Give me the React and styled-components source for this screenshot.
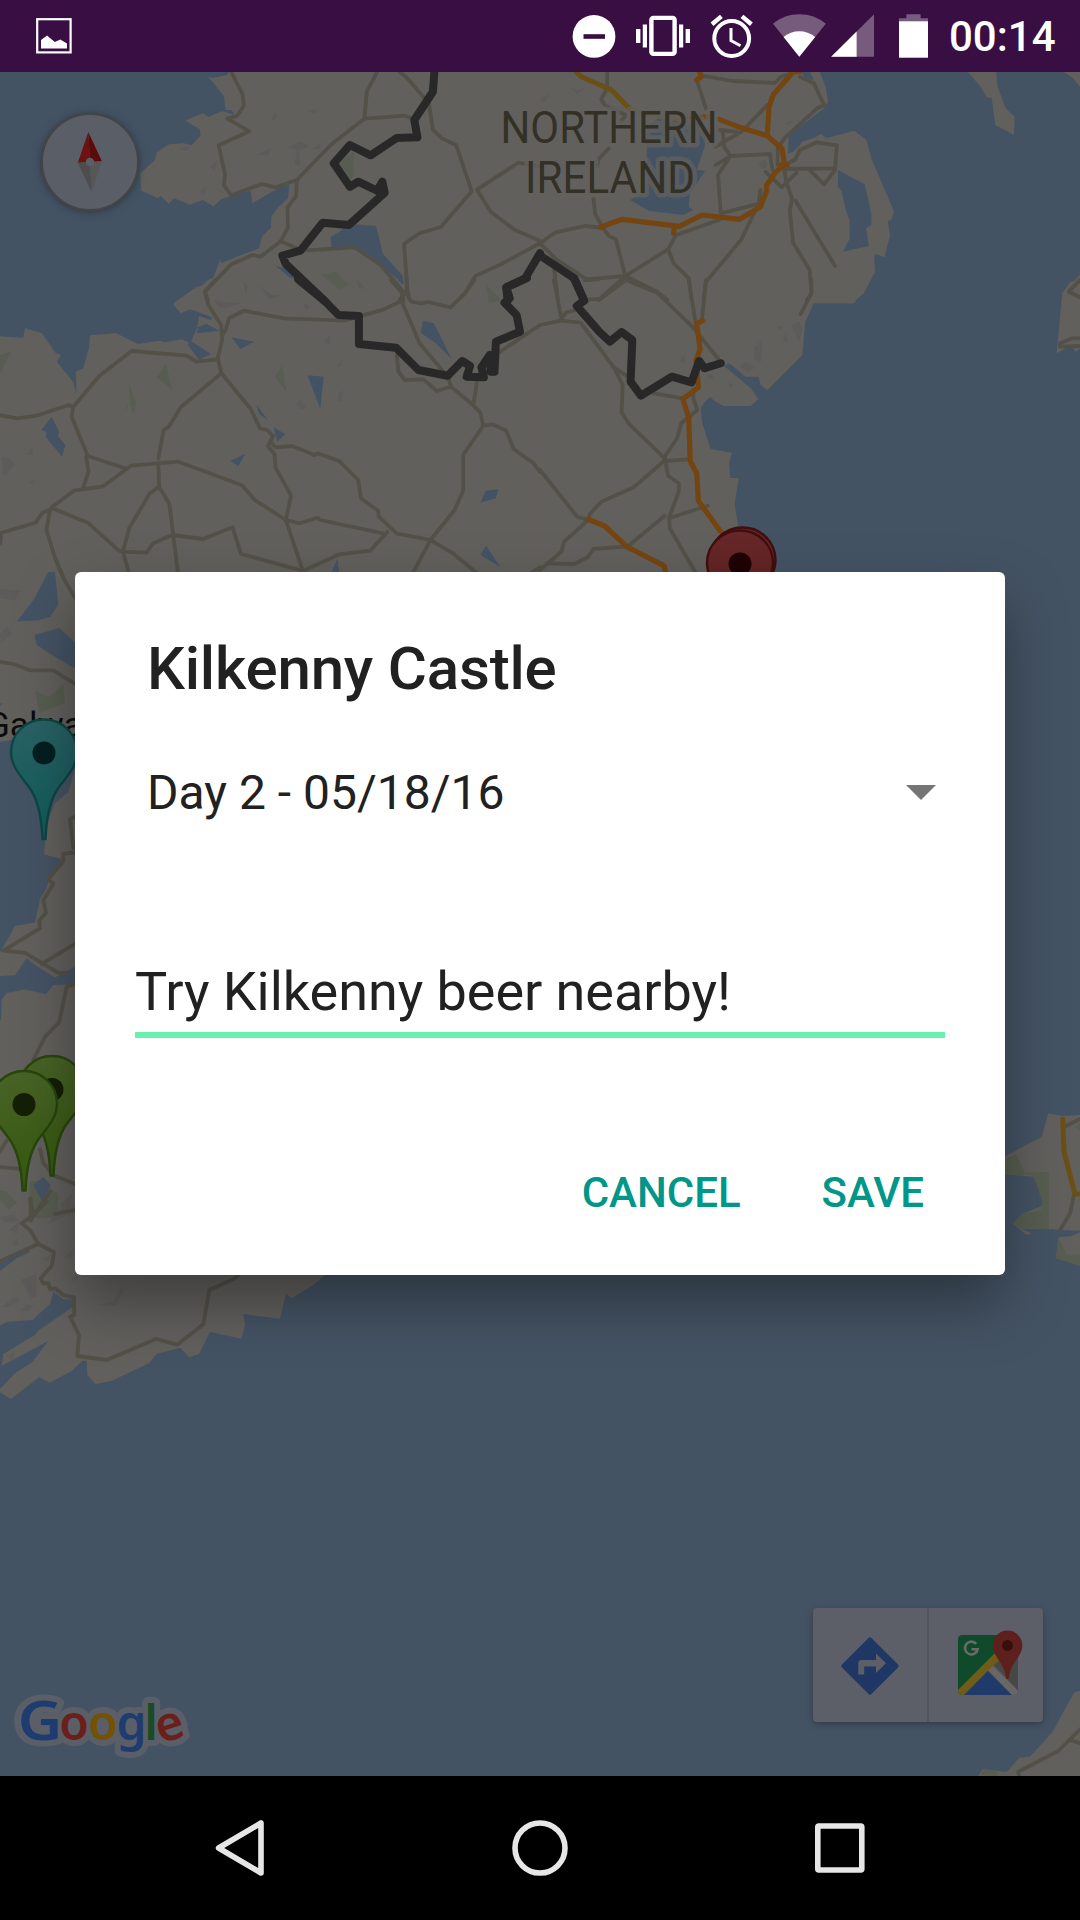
import React from 'react';
import styled, { createGlobalStyle } from 'styled-components';

const Global = createGlobalStyle`
  *, *::before, *::after { box-sizing: border-box; }
  body { margin: 0; background: #000; font-family: Roboto, "Noto Sans", sans-serif; }
`;

const Screen = styled.div`
  width: 1080px;
  height: 1920px;
  display: flex;
  flex-direction: column;
  overflow: hidden;
  background: #000;
`;

/* ---------- status bar ---------- */

const StatusBar = styled.header`
  flex: none;
  height: 72px;
  display: flex;
  align-items: center;
  justify-content: space-between;
  padding: 0 24px 0 36px;
  background: #390e43;
`;

const StatusGroup = styled.div`
  display: flex;
  align-items: center;
`;

const StatusIcon = styled.svg`
  display: block;
  flex: none;
  width: ${(p) => p.$w}px;
  height: 72px;
  margin-right: ${(p) => p.$gap || 0}px;
`;

const Clock = styled.span`
  width: 107px;
  font-size: 42px;
  line-height: 72px;
  font-weight: 500;
  color: #fff;
  white-space: nowrap;
  padding-top: 2px;
`;

/* ---------- map ---------- */

const MapPane = styled.main`
  position: relative;
  flex: 1;
  background: #445364;
  overflow: hidden;
`;

const MapCanvas = styled.svg`
  display: block;
  width: 1080px;
  height: 1704px;
`;

const Compass = styled.div`
  position: absolute;
  left: 41px;
  top: 41px;
  width: 98px;
  height: 98px;
  border-radius: 50%;
  background: #5a5f67;
  border: 2px solid #454545;
  box-shadow: 0 1px 9px rgba(0, 0, 0, 0.35);
  display: flex;
  align-items: center;
  justify-content: center;
`;

const MapTools = styled.div`
  position: absolute;
  right: 37px;
  bottom: 54px;
  width: 230px;
  height: 114px;
  display: flex;
  border-radius: 4px;
  background: #5c5f67;
  box-shadow: 0 2px 7px rgba(0, 0, 0, 0.3);
`;

const ToolButton = styled.button`
  width: ${(p) => (p.$divided ? 116 : 114)}px;
  border: 0;
  border-left: ${(p) => (p.$divided ? '2px solid #50555e' : '0')};
  padding: ${(p) => p.$pad};
  background: none;
  display: flex;
  align-items: center;
  justify-content: center;
`;

/* ---------- dialog ---------- */

const Overlay = styled.div`
  position: absolute;
  inset: 0;
  display: flex;
  align-items: center;
  justify-content: center;
  padding-bottom: 1px;
`;

const Dialog = styled.section`
  width: 930px;
  height: 703px;
  display: flex;
  flex-direction: column;
  padding: 61px 60px 0;
  border-radius: 6px;
  background: #fff;
  color: #212121;
  box-shadow: 0 28px 60px rgba(0, 0, 0, 0.36);
`;

const Title = styled.h1`
  margin: 0;
  padding-left: 12px;
  font-size: 60px;
  line-height: 72px;
  font-weight: 500;
  letter-spacing: -0.18px;
`;

const DaySelect = styled.div`
  display: flex;
  align-items: center;
  justify-content: space-between;
  margin-top: 52px;
  padding: 0 9px 0 12px;
  font-size: 48px;
  line-height: 72px;
`;

const Caret = styled.svg`
  display: block;
  width: 30px;
  height: 15px;
  margin-bottom: 2px;
`;

const NoteField = styled.div`
  margin-top: 119px;
  height: 90px;
  border-bottom: 6px solid #69f0ae;
  font-size: 54px;
  line-height: 88px;
  letter-spacing: -0.05px;
  white-space: nowrap;
`;

const Actions = styled.footer`
  display: flex;
  justify-content: flex-end;
  gap: 81px;
  margin-top: 119px;
  padding-right: 21px;
`;

const Action = styled.button`
  border: 0;
  padding: 0;
  background: none;
  font-family: inherit;
  font-size: 42px;
  line-height: 72px;
  font-weight: 500;
  color: #009688;
`;

/* ---------- navigation bar ---------- */

const NavBar = styled.nav`
  flex: none;
  height: 144px;
  display: flex;
  align-items: center;
  justify-content: space-between;
  padding: 0 210px;
  background: #000;
`;

const NavIcon = styled.svg`
  display: block;
  width: 60px;
  height: 60px;
  fill: none;
  stroke: #e6e6e6;
  stroke-width: 5.6;
  stroke-linejoin: round;
`;

/* ---------- map geometry ---------- */

// Each tile keeps its own grid: x, y is the origin, kx and ky the size of a unit.
const K = 540 / 1568;
const T = 1 / 3;

const tiles = [
  {
    x: 0, y: 0, kx: K, ky: T,
    land: [
      '605,230 650,288 655,330 672,330 682,345 645,334 605,350 588,340 538,362 580,388 583,405 557,436 533,430 492,433 475,443 455,458 450,480 407,520 410,572 458,594 467,588 490,612 505,595 552,614 588,600 620,619 642,598 672,588 728,572 733,610 815,560 840,556 836,595 805,625 788,650 787,683 762,708 752,745 700,765 643,790 640,778 620,832 580,855 585,862 523,900 523,910 1575,910 1575,210 668,210 660,225 618,234',
    ],
    water: [
      '960,712 1020,672 1092,678 1112,762 1170,828 1172,852 1105,795 1040,745 963,742',
      '800,797 850,812 862,838 840,832',
    ],
    green: ['985,490 1027,455 1027,525 1015,548', '935,825 975,814 1012,855 985,868'],
    relief: [
      '788,358 805,335 800,358', '892,332 918,330 918,342', '745,465 788,443 778,466', '905,446 942,426 925,448',
      '835,443 870,423 897,440 868,450 872,495 855,495 862,450', '610,500 630,482 622,512', '525,447 550,438 542,453',
      '708,845 718,858 714,880', '752,858 790,888 812,886 785,895', '1037,838 1060,866 1040,862', '582,575 600,560 592,585',
    ],
    roads: [
      '672,216 705,285 708,318 688,348 660,356 724,394 635,436 653,522 650,556 672,586 760,552 800,562 862,540 960,435 1058,356 1175,347 1195,355',
      '1095,216 1065,275 1058,356',
      '1160,216 1180,232 1230,292 1245,310 1257,388 1283,415 1325,436 1370,574 1280,681 1218,700 1173,732 1183,870 1190,900',
      '862,540 860,588 835,622 836,683 815,724 757,770 733,765 672,793 595,875 603,900',
      '815,724 878,752 1030,742 1105,795 1175,880 1160,900',
      '1568,722 1495,690 1425,635 1385,569 1505,488 1568,500',
      '1568,730 1450,795 1380,828 1350,880 1330,900',
    ],
    border: [
      '1262,206 1257,275 1203,360 1212,412 1152,414 1076,466 1016,435 969,490 1016,560 1040,545 1095,572 1110,545 1117,578 1013,675 937,668 872,752 820,767 830,792 940,900',
      '1568,760 1525,835 1470,862 1474,902',
    ],
  },
  {
    x: 540, y: 0, kx: K, ky: T,
    land: [
      '-5,210 755,210 770,235 795,240 785,218 810,210 830,262 836,305 825,325 722,405 720,460 735,455 750,440 762,425 800,412 815,402 832,415 912,392 948,420 962,475 1028,635 1020,660 1010,662 1016,708 1000,772 975,762 970,770 973,815 940,880 918,900 912,910 -5,910',
      '1240,212 1325,212 1328,258 1352,325 1378,350 1376,404 1322,375 1312,295 1295,290 1283,265',
      '1515,212 1575,212 1575,268 1545,232',
      '1572,820 1517,880 1514,910 1575,910',
    ],
    water: [
      '865,510 943,553 963,645 962,675 947,685 955,738 880,755 900,715 898,660 888,630 875,572 865,560',
      '310,380 350,350 480,370 478,440 455,510 480,512 435,580 432,620 445,630 415,645 315,632 262,600 310,570',
    ],
    relief: ['90,262 108,272 130,262 108,282', '0,300 28,280 15,305', '710,372 735,360 722,376', '635,490 655,475 660,500 645,508', '668,525 690,545 672,545'],
    roads: [
      '195,216 195,265 178,297 190,318 250,345 235,365',
      '475,228 560,243 682,249 700,230 730,220',
      '455,240 482,325',
      '755,230 795,250 825,315 805,325 712,412 690,445 690,495',
      '660,315 585,395 510,440',
      '520,390 570,395', '530,390 535,440 553,468 668,462 675,510',
      '510,495 553,468 517,525 525,640 640,610',
      '720,490 740,480 755,450 803,427 862,436 857,505 710,507',
      '655,515 702,562 745,518', '785,512 825,553 857,510',
      '710,510 715,545 732,597 725,630 735,728 783,810 788,880 775,900',
      '742,602 857,798',
      '640,570 635,610 585,718 482,845 475,900',
      '520,660 395,705 372,748 388,790 432,835 440,900',
      '372,748 248,828 220,718 200,708 180,680 160,640 155,595',
      '248,828 135,838 50,780 0,730 45,697 130,678 170,682',
      '248,828 170,900', '248,828 340,875 370,900', '40,800 52,900', '200,445 170,478 165,500',
    ],
    trunk: ['105,216 120,230 208,270 262,328'],
    trunkFaint: ['262,328 320,345 400,358 440,355'],
    motorway: [
      '440,355 485,350', '520,358 575,380 660,407 703,447 710,495 685,515 658,555 658,572 640,620 580,658 470,645 405,679 238,658 175,682',
      '755,214 735,216 678,283 665,320 660,407', '388,700 390,682 405,679', '455,240 468,230 462,212', '700,495 718,495',
    ],
    border: ['-2,765 100,835 128,902'],
  },
  {
    x: 0, y: 280, kx: K, ky: T,
    land: [
      '530,-2 503,74 525,100 553,88 615,112 612,120 578,108 572,145 553,190 528,178 490,185 478,187 465,182 400,192 338,160 262,166 258,205 242,265 220,275 222,340 212,305 165,245 178,225 162,220 122,160 73,144 67,174 -5,168 -5,905 1575,905 1575,-2',
    ],
    water: [
      '520,-4 608,-4 585,18 572,20 500,72 480,60',
      '575,142 600,132 637,152 572,160', '553,182 612,222 578,240 560,215 545,195',
      '672,172 738,185 698,207', '893,286 940,290 930,388', '745,375 778,420 752,402', '795,442 828,462 805,485',
      '668,542 712,522 692,558', '150,410 120,450 135,455 133,472 180,530 190,495 168,468 172,455',
      '1228,122 1260,130 1312,238 1265,190 1222,158', '1410,632 1447,628 1440,655 1395,668', '1412,797 1453,862 1395,825',
      '980,835 985,880 962,880', '1155,0 1170,0 1170,14',
    ],
    green: [
      '0,225 32,215 0,280', '482,252 500,330 455,292', '375,315 397,370 387,402 378,375', '820,255 832,335 798,292', '1412,15 1455,60 1420,70',
    ],
    relief: [
      '620,60 650,66 698,70 655,85 635,80', '708,5 718,18 714,42', '752,18 790,46 812,45 785,58', '1037,0 1060,26 1040,22',
      '942,180 960,165 955,197', '978,258 992,238 990,260', '982,340 997,332 992,362 980,362', '860,368 875,358 888,385 870,388',
      '358,392 374,370 370,385', '5,530 20,530 45,552 10,588', '78,525 92,500 96,525', '82,608 105,598 95,612', '880,72 900,78 890,90',
    ],
    roads: [
      '625,0 595,35 605,75 642,135 645,180 632,235 643,280 728,387 755,445 775,450 793,468 778,498 797,523 800,563 845,647 830,720 882,880',
      '645,165 655,150 665,115 708,92 825,115 1000,122 1115,88 1172,60 1165,35 1135,0',
      '1165,60 1218,190 1300,290 1310,320 1370,372 1395,398 1403,437 1345,525 1345,632 1320,690 1250,780 1198,880',
      '1403,437 1430,433 1470,452 1492,508 1548,548 1568,575',
      '1180,0 1182,45 1195,65 1222,70 1243,66 1308,82 1350,40 1378,0',
      '1152,225 1157,275 1175,300 1230,298 1268,333 1310,320',
      '1385,305 1375,372', '1568,135 1445,220',
      '632,238 570,245 542,227 382,213 288,288 212,382 200,375 110,406 52,415 0,406',
      '212,382 208,410 255,528 368,566', '250,530 257,575 240,628',
      '643,280 525,382 490,440 475,450 460,535',
      '152,680 215,632 300,619 380,557 518,545 703,616 740,660 830,720 870,730 922,713 930,720 1112,760',
      '460,550 462,620 435,640 375,745 357,815 375,880', '462,620 492,672 503,765 517,880',
      '0,760 103,728 122,700 152,685 255,728 345,812 357,815 425,818 445,790 500,765 590,777 675,742 700,822 880,873 985,823 1075,812 1125,755',
      '790,490 800,502 848,498 913,525 922,520 985,543 1040,600 1048,655 1098,692 1100,710 1152,760 1250,780 1315,820 1385,880',
      '145,690 135,750 160,835 187,900', '0,760 3,775 0,790', '1540,880 1568,862',
    ],
    border: [
      '940,60 983,105 1042,108 1042,192 1150,203 1215,270 1300,287 1342,243 1365,258 1355,290 1405,292 1398,262 1422,225 1425,275 1436,275 1440,185 1510,155 1500,105 1465,68 1480,55 1470,22 1530,-6',
      '866,-2 945,65',
    ],
  },
  {
    x: 540, y: 280, kx: K, ky: T,
    land: [
      '-5,-2 957,-2 940,40 903,71 830,58 798,62 770,125 762,225 660,330 640,315 635,290 597,290 550,250 535,258 612,325 634,357 612,378 533,378 505,362 495,350 478,365 467,385 470,425 495,507 557,518 549,550 552,594 577,594 565,672 576,745 600,900 -5,900',
      '1575,-2 1540,5 1517,40 1500,220 1535,200 1548,205 1555,215 1575,200',
    ],
    relief: ['622,200 645,182 640,250 620,235', '580,262 598,245 625,262 605,275', '730,135 752,125 762,150 752,185', '705,180 715,155 718,190', '407,245 420,220 422,250', '545,310 560,312 555,322', '685,138 705,140 698,150', '480,285 500,282 505,300'],
    roads: [
      '40,0 62,115 75,98 105,90', '0,135 60,122 118,128 215,263 240,315 237,397 257,430 360,533 398,475 410,430 457,390 445,355 445,330',
      '130,58 175,57 250,0 340,38 445,143 520,240', '432,0 452,130', '482,0 470,120', '788,0 788,40 757,102',
      '330,340 415,355', '360,543 272,622 178,665 145,702 140,720 70,785 62,815 0,870', '360,543 430,538',
      '362,533 372,587 403,610 403,635 375,712 377,745 450,875', '375,715 487,677', '260,795 362,707', '0,570 108,710 140,720',
      '20,850 100,852 138,832 155,807 245,800', '210,260 255,290', '1568,0 1535,35 1568,52', '1568,175 1545,175 1510,190 1510,200 1568,198',
      '130,0 170,-2',
    ],
    motorway: ['473,122 455,130 465,208 453,240 460,322 415,357 432,415 436,543 455,580 460,663 525,755', '140,718 188,738 252,800 360,857 367,885'],
    border: ['99,-4 128,62 107,78 172,155 203,185 237,156 268,180 263,305 293,347 383,290 440,307 462,243 478,265 525,250'],
  },
  {
    x: 0, y: 560, kx: T, ky: 0.44643,
    land: ['-3,20 240,20 240,1450 -3,1450'],
    water: [
      '-3,408 60,400 240,400 225,470 205,520 165,545 140,590 132,660 185,670 150,710 140,735 120,760 105,812 45,820 -3,884',
      '-3,932 45,930 80,892 100,905 165,935 240,905 240,950 160,952 138,972 75,962 20,970 5,985 3,1030 -3,1032',
      '50,138 100,90 145,27 165,27 175,100 150,128 115,135', '103,168 178,152 240,195 240,250 150,210 110,190', '-3,322 8,320 -3,330',
    ],
    green: ['105,292 145,308 190,278 195,320 118,343', '88,1392 120,1390 175,1420 170,1470 120,1475 88,1468', '-3,1412 20,1415 50,1440 25,1455 -3,1430'],
    relief: ['0,65 60,68 45,90 0,85', '0,165 20,150 35,165 5,185', '180,1445 215,1420 210,1470', '30,1500 60,1480 50,1510'],
    roads: [
      '0,228 40,233 90,247 160,247 225,277', '165,-5 190,40 225,85', '225,575 210,580 220,645',
      '225,655 190,658 190,675 145,715 160,725 130,762 138,790 118,808 120,825 10,875 75,880 175,925 200,925', '125,905 225,860',
      '225,950 200,955 178,1035 135,1068 100,1120', '0,1360 80,1365', '0,1325 20,1300', '120,1320 130,1350 160,1378 225,1398', '92,1478 150,1415', '92,1430 92,1480',
    ],
    lakes: ['100,1400 130,1382 152,1400 125,1435'],
  },
  {
    x: 0, y: 1200, kx: T, ky: T,
    land: [
      '-3,-10 1000,-10 1000,205 975,225 940,255 875,295 858,280 840,356 768,347 730,342 735,375 725,416 630,396 597,462 568,472 540,443 470,462 447,490 335,542 287,552 262,525 260,482 248,482 215,512 150,548 117,532 33,597 -3,575 -3,570 45,520 97,487 145,423 5,497 10,462 105,405 115,392 222,318 215,298 190,298 160,275 150,312 97,360 22,365 -3,378 -3,215 50,175 90,155 80,148 -3,185',
    ],
    green: ['88,-3 175,-3 172,40 140,55 92,48'],
    relief: [
      '62,240 108,222 110,290 92,292', '188,178 218,150 218,170', '5,322 40,292 60,300 25,320', '298,315 340,305 360,268 370,266 348,318',
      '215,232 240,225 220,250', '38,132 52,118 54,138', '25,92 50,78 52,90', '20,470 45,452 38,480', '65,330 80,312 100,318 82,335', '0,50 40,45 60,62 10,68', '170,30 225,20 190,52 145,72', '128,180 152,162 148,182',
    ],
    roads: [
      '-3,185 115,132 90,90 65,70 100,45 140,5', '115,132 162,157 155,198 122,235 130,250 145,250 150,268 165,265 190,285 222,292 223,345 210,350 237,405 232,468 320,480 468,417 532,434 610,373 628,270 705,235 718,222',
      '100,45 90,-3', '165,42 225,30',
    ],
  },
  {
    x: 980, y: 1080, kx: T, ky: T,
    land: [
      '70,232 185,170 205,100 248,108 303,105 303,452 245,450 205,447 125,447 155,460 140,465 100,432 125,402 185,378 188,365 162,290 70,283',
      '303,455 275,468 235,472 228,535 303,558',
    ],
    green: [
      '70,235 108,225 135,278 130,287 70,283', '135,278 207,276 207,447 120,445 100,430 125,402 183,390 188,365 162,290',
      '235,475 262,525 303,522 303,558 228,535', '285,140 303,128 303,155', '295,360 303,355 303,368',
    ],
    roads: ['258,138 303,116', '282,345 270,400 240,450'],
    trunk: ['248,118 252,215 285,342 303,342'],
  },
  {
    x: 780, y: 1560, kx: T, ky: T,
    land: ['885,397 903,392 903,655 590,655 608,627 680,636 718,593 750,590 818,515 880,402'],
    green: ['600,645 612,630 650,632 655,648'],
    roads: ['903,506 868,540 835,573 715,635 718,655', '868,540 903,550'],
  },
];

const layers = [
  { key: 'land', fill: '#62605d' },
  { key: 'water', fill: '#445364' },
  { key: 'green', fill: '#575d50' },
  { key: 'relief', fill: '#5d5a5a' },
  { key: 'roads', stroke: '#535048', width: 3.8 },
  { key: 'lakes', fill: '#445364' },
  { key: 'trunkFaint', stroke: '#665a38', width: 4.4 },
  { key: 'trunk', stroke: '#6b5016', width: 5 },
  { key: 'motorway', stroke: '#744510', width: 5.2 },
  { key: 'border', stroke: '#282828', width: 8 },
];

function project(tile, points) {
  return points
    .split(' ')
    .map((pair) => {
      const [px, py] = pair.split(',').map(Number);
      return `${(tile.x + px * tile.kx).toFixed(1)},${(tile.y + py * tile.ky).toFixed(1)}`;
    })
    .join(' ');
}

function MapLayer({ layer }) {
  return (
    <g
      fill={layer.fill || 'none'}
      stroke={layer.stroke || 'none'}
      strokeWidth={layer.width}
      strokeLinecap="round"
      strokeLinejoin="round"
    >
      {tiles.map((tile, t) =>
        (tile[layer.key] || []).map((points, i) =>
          layer.fill ? (
            <polygon key={`${t}-${i}`} points={project(tile, points)} />
          ) : (
            <polyline key={`${t}-${i}`} points={project(tile, points)} />
          ),
        ),
      )}
    </g>
  );
}

function Pin({ x, y, id, top, bottom, edge, dot }) {
  return (
    <g transform={`translate(${x} ${y})`}>
      <defs>
        <linearGradient id={id} x1="0" y1="0" x2="0" y2="1">
          <stop offset="0" stopColor={top} />
          <stop offset="1" stopColor={bottom} />
        </linearGradient>
      </defs>
      <path
        d="M0 -33.5C18.5 -33.5 33 -19 33 -1C33 13 24 22 15 34C6 46 2.5 62 1.5 86H-1.5C-2.5 62 -6 46 -15 34C-24 22 -33 13 -33 -1C-33 -19 -18.5 -33.5 0 -33.5Z"
        fill={`url(#${id})`}
        stroke={edge}
        strokeWidth="2.4"
      />
      <circle r="11.5" fill={dot} />
    </g>
  );
}

const logo = [
  { char: 'G', x: 17.5, size: 54, length: 45, color: '#1f3c70' },
  { char: 'o', x: 59.3, size: 48, color: '#6b1f1a' },
  { char: 'o', x: 88.2, size: 48, color: '#735203' },
  { char: 'g', x: 116.4, size: 48, color: '#1f3c70' },
  { char: 'l', x: 144.2, size: 48, color: '#1a4a26' },
  { char: 'e', x: 155.8, size: 48, color: '#6b1f1a', tilt: 'rotate(-18 170.5 1727)' },
];

function LogoLetters({ plain }) {
  return logo.map((l) => (
    <text
      key={l.x}
      x={l.x}
      y="1740"
      fontSize={l.size}
      textLength={l.length}
      lengthAdjust={l.length ? 'spacingAndGlyphs' : undefined}
      transform={l.tilt}
      fill={plain ? '#5a5f67' : l.color}
    >
      {l.char}
    </text>
  ));
}

function MapView() {
  return (
    <MapCanvas viewBox="0 72 1080 1704">
      {layers.map((layer) => (
        <MapLayer key={layer.key} layer={layer} />
      ))}

      <g
        fontFamily="Roboto, sans-serif"
        fontSize="44.5"
        fill="#333026"
        stroke="#62605d"
        strokeOpacity="0.75"
        strokeWidth="9"
        strokeLinejoin="round"
        paintOrder="stroke"
      >
        <text x="500.5" y="143" textLength="217" lengthAdjust="spacingAndGlyphs">NORTHERN</text>
        <text x="525" y="193" textLength="170" lengthAdjust="spacingAndGlyphs">IRELAND</text>
      </g>
      <text x="-14" y="737" fontFamily="Roboto, sans-serif" fontSize="35" fill="#0c0c0c" stroke="#62605d" strokeWidth="5" strokeOpacity="0.7" paintOrder="stroke">
        Galway
      </text>

      <Pin x={742.5} y={561} id="redBack" top="#6a2a2b" bottom="#5a1a1b" edge="#420d0e" dot="#1f0304" />
      <Pin x={740} y={564} id="redFront" top="#672829" bottom="#5a1a1b" edge="#420d0e" dot="#1f0304" />
      <Pin x={44} y={753} id="teal" top="#2a6266" bottom="#0f5c5a" edge="#0e4644" dot="#041f20" />
      <Pin x={52} y={1089.5} id="greenBack" top="#486326" bottom="#36590f" edge="#28460d" dot="#141f05" />
      <Pin x={24} y={1104.5} id="greenFront" top="#486326" bottom="#36590f" edge="#28460d" dot="#141f05" />

      <g fontFamily="Noto Sans, sans-serif" fontWeight="600">
        <g stroke="#5a5f67" strokeWidth="12" strokeLinejoin="round" aria-hidden="true">
          <LogoLetters plain />
        </g>
        <LogoLetters />
      </g>
    </MapCanvas>
  );
}

function CompassNeedle() {
  return (
    <svg width="30" height="64" viewBox="75 130 30 64">
      <path d="M88.3 132L77.8 162.8L90 162Z" fill="#6d1313" />
      <path d="M88.3 132L101.9 161.2L90 162Z" fill="#5c0b0b" />
      <path d="M77.8 162.8L90 162L91.6 192Z" fill="#4d4d4d" />
      <path d="M101.9 161.2L90 162L91.6 192Z" fill="#575756" />
      <circle cx="90" cy="162" r="4.2" fill="#5a5f67" />
    </svg>
  );
}

function DirectionsIcon() {
  return (
    <svg width="60" height="60" viewBox="-30 -30 60 60">
      <rect x="-20.8" y="-20.8" width="41.6" height="41.6" rx="2" fill="#1e3765" transform="rotate(45)" />
      <path d="M-11.8 8.5V-2.5Q-11.8 -6 -8.5 -6H6V-12.5L16 -2.7L6 7V0.5H-5.8V8.5Z" fill="#5c5f67" />
    </svg>
  );
}

function GoogleMapsIcon() {
  return (
    <svg width="66" height="66" viewBox="955 1630 66 66" overflow="visible">
      <defs>
        <clipPath id="tile"><rect x="957" y="1636" width="60" height="60" rx="4.5" /></clipPath>
      </defs>
      <g clipPath="url(#tile)">
        <rect x="957" y="1636" width="60" height="60" fill="#555556" />
        <path d="M957 1636H1010V1650L962 1698H957Z" fill="#0f4a2b" />
        <path d="M957 1691L999 1649L1007 1653L963 1697H957Z" fill="#6f5c19" />
        <path d="M986.7 1672L1011.5 1696.5H962.5Z" fill="#203a69" />
        <path d="M987.5 1671.5L992 1667L1017 1692V1697H1012Z" fill="#686765" />
        <path d="M993 1666L1006 1655H1017V1691Z" fill="#474747" />
      </g>
      <path d="M975.2 1644.8A6.4 6.4 0 1 0 976.7 1650.2H970.5" fill="none" stroke="#686b68" strokeWidth="2.6" />
      <path d="M1006.5 1631.6A14.8 14.8 0 0 1 1021.3 1646.4C1021.3 1658 1010 1662 1007.6 1680H1005.4C1003 1662 991.7 1658 991.7 1646.4A14.8 14.8 0 0 1 1006.5 1631.6Z" fill="#5e201c" />
      <circle cx="1006.5" cy="1646.4" r="5.4" fill="#360f0d" />
    </svg>
  );
}

function StatusIcons() {
  return (
    <StatusGroup>
      <StatusIcon $w={44} $gap={20} viewBox="572.5 0 44 72">
        <circle cx="594.5" cy="36.4" r="21.4" fill="#fff" />
        <rect x="584" y="34.2" width="21.5" height="4.6" fill="#390e43" />
      </StatusIcon>
      <StatusIcon $w={54} $gap={20} viewBox="636 0 54 72">
        <rect x="651.4" y="17.9" width="23.2" height="36" rx="2" fill="none" stroke="#fff" strokeWidth="4.4" />
        <path d="M642.8 24.5h4.2v23h-4.2zM636 29h4.4v14H636zM679 24.5h4.2v23H679zM685.6 29h4.4v14h-4.4z" fill="#fff" />
      </StatusIcon>
      <StatusIcon $w={44} $gap={18} viewBox="710 0 44 72" fill="none" stroke="#fff">
        <circle cx="731.7" cy="38.5" r="17.4" strokeWidth="4" />
        <path d="M731 28V40.5L740.5 45.8" strokeWidth="3" />
        <path d="M712 24.2L721.4 16.4M742 16.4L751.4 24.2" strokeWidth="4.4" />
      </StatusIcon>
      <StatusIcon $w={54} $gap={5} viewBox="772 0 54 72">
        <path d="M799.3 56.8L773 23.8C788 11.2 810.6 11.2 825.8 23.8Z" fill="#775b7d" />
        <path d="M799.3 56.8L783.6 37C792.5 29.4 806 29.4 815.2 37Z" fill="#fff" />
      </StatusIcon>
      <StatusIcon $w={43} $gap={25} viewBox="831 0 43 72">
        <path d="M874 14.2V56.8H831.2Z" fill="#775b7d" />
        <path d="M856.6 31.6V56.8H831.2Z" fill="#fff" />
      </StatusIcon>
      <StatusIcon $w={29} $gap={21} viewBox="899 0 29 72">
        <path d="M906.4 14.2H920.6V18.2H928V22H899V18.2H906.4Z" fill="#775b7d" />
        <rect x="899" y="21.3" width="29" height="36.4" fill="#fff" />
      </StatusIcon>
      <Clock>00:14</Clock>
    </StatusGroup>
  );
}

export default function App() {
  return (
    <Screen>
      <Global />
      <StatusBar>
        <StatusIcon $w={36} viewBox="36 0 36 72">
          <rect x="37.2" y="19.2" width="33.4" height="33.2" fill="none" stroke="#fff" strokeWidth="2.2" />
          <path d="M41 48.5V40L47 35.4L54.8 42L60.3 39.4L67 43.4V48.5Z" fill="#fff" />
        </StatusIcon>
        <StatusIcons />
      </StatusBar>

      <MapPane>
        <MapView />
        <Compass><CompassNeedle /></Compass>
        <MapTools>
          <ToolButton $pad="2px 0 0 0" aria-label="Directions"><DirectionsIcon /></ToolButton>
          <ToolButton $divided $pad="0 0 6px 6px" aria-label="Open in Google Maps"><GoogleMapsIcon /></ToolButton>
        </MapTools>

        <Overlay>
          <Dialog role="dialog">
            <Title>Kilkenny Castle</Title>
            <DaySelect>
              Day 2 - 05/18/16
              <Caret viewBox="0 0 30 15"><path d="M0 0H30L15 15Z" fill="#757575" /></Caret>
            </DaySelect>
            <NoteField>Try Kilkenny beer nearby!</NoteField>
            <Actions>
              <Action>CANCEL</Action>
              <Action>SAVE</Action>
            </Actions>
          </Dialog>
        </Overlay>
      </MapPane>

      <NavBar>
        <NavIcon viewBox="210 1818 60 60"><path d="M261 1823V1873L218.6 1848Z" /></NavIcon>
        <NavIcon viewBox="510 1818 60 60"><circle cx="540" cy="1848" r="25" /></NavIcon>
        <NavIcon viewBox="810 1818 60 60"><rect x="817.8" y="1826" width="44" height="44" rx="1" /></NavIcon>
      </NavBar>
    </Screen>
  );
}
